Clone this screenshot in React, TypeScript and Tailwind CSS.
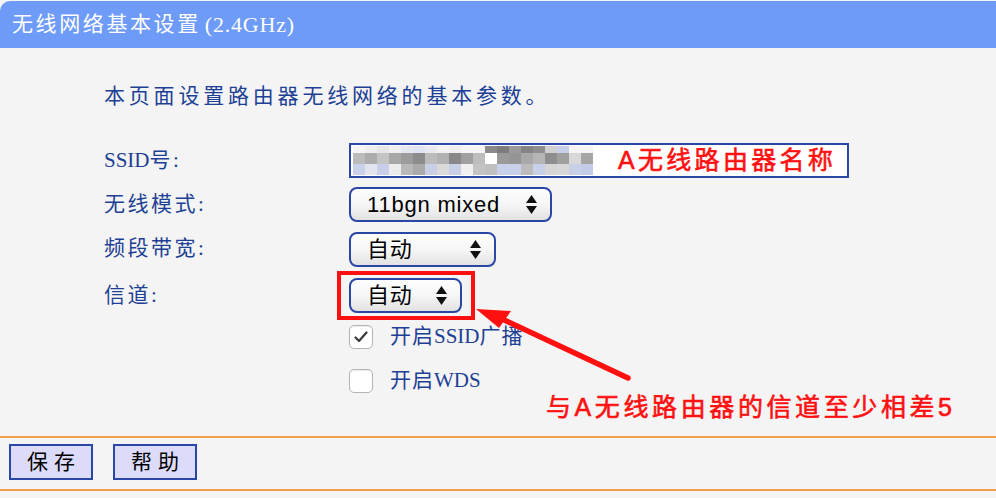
import React from "react";

const serif = "font-['Liberation_Serif','Noto_Sans_CJK_SC',serif]";
const sans = "font-['Liberation_Sans','Noto_Sans_CJK_SC',sans-serif]";

const blurRows = [
  ["#f4f4f4", "#eeeeee", "#e6e6e6", "#f0f0f0", "#e4e6f0", "#dfe3f2", "#e8e8ee", "#f2f2f2", "#eeeeee", "#f4f4f4", "#f4f4f4", "#8a8a8a", "#7c7c7c", "#9a9a9a", "#848484", "#8e8e8e", "#d0d0d0", "#c8cfe8", "#f4f4f4", "#f4f4f4"],
  ["#bbbbbb", "#acacac", "#c4c4c4", "#a8a8a8", "#9c9c9c", "#8c8c8c", "#bcbcbc", "#b2b2b2", "#888888", "#a0a0a0", "#bdbdbd", "#ffffff", "#9a9a9a", "#959595", "#a8a8a8", "#b5b5b5", "#8e8e8e", "#a0a0a0", "#d8d8d8", "#a5a5a5"],
  ["#cad1ea", "#e2e4ee", "#c9cfe8", "#ececec", "#b8b8b8", "#aaaaaa", "#c8d0e8", "#dadada", "#c8d0e8", "#f0f0f0", "#c4c4c4", "#bfbfbf", "#c8d0ea", "#c8d0ea", "#bbbbbb", "#c8d0e8", "#d6d6d6", "#d8d8d8", "#c8d0e8", "#c4cbe6"],
];

const Arrows = () => (
  <svg width="11" height="19" viewBox="0 0 11 19" className="shrink-0">
    <polygon points="0,8 5.5,0 11,8" fill="#111" />
    <polygon points="0,11 5.5,19 11,11" fill="#111" />
  </svg>
);

const Select = ({ label, w }: { label: string; w: string }) => (
  <div
    className={`flex h-[35px] ${w} items-center justify-between rounded-[8px] border-2 border-[#2a47a6] bg-gradient-to-b from-[#fdfdfd] via-[#f6f6f6] to-[#e2e2e2] pl-[16px] pr-[13px] text-[22px] text-black ${sans}`}
  >
    <span className="tracking-[0.8px]">{label}</span>
    <Arrows />
  </div>
);

const Label = ({ children }: { children: React.ReactNode }) => (
  <div className={`w-[245px] shrink-0 text-[21px] tracking-[2.5px] text-[#1d3f95] ${serif}`}>{children}</div>
);

const Check = ({ checked, text, className }: { checked?: boolean; text: React.ReactNode; className: string }) => (
  <div className={`flex items-center pl-[349px] ${className}`}>
    <div className="flex size-[24px] items-center justify-center rounded-[5px] border border-[#b4b4b4] bg-white shadow-[inset_0_1px_1px_rgba(0,0,0,0.08)]">
      {checked && (
        <svg width="14" height="12" viewBox="0 0 14 12">
          <path d="M1.5 6.5 L5 10 L12.5 1.5" stroke="#3a3a3a" strokeWidth="2.2" fill="none" strokeLinecap="round" strokeLinejoin="round" />
        </svg>
      )}
    </div>
    <span className={`ml-[17px] text-[21px] tracking-[1px] text-[#1d3f95] ${serif}`}>{text}</span>
  </div>
);

export default function App() {
  return (
    <div className="relative h-[498px] w-[996px] overflow-hidden bg-[#f4f4f4]">
      {/* header */}
      <div className={`mt-[1px] flex h-[47px] items-center rounded-tl-[10px] bg-[#6e9bf7] pl-[12px] text-[21px] tracking-[2.6px] text-white ${serif}`}>
        无线网络基本设置 <span className="ml-[4px] text-[22px] tracking-[0.8px]">(2.4GHz)</span>
      </div>

      <p className={`mt-[36px] h-[24px] pl-[104px] text-[21px] leading-[24px] tracking-[3.8px] text-[#1d3f95] ${serif}`}>
        本页面设置路由器无线网络的基本参数。
      </p>

      {/* SSID */}
      <div className="mt-[35px] flex h-[35px] items-center pl-[104px]">
        <Label>
          <span className="tracking-normal">SSID</span>号:
        </Label>
        <div className="flex h-[35px] w-[500px] items-center border-2 border-[#2a47a6] bg-white pl-[2px]">
          <div className="flex flex-col">
            {blurRows.map((row, i) => (
              <div key={i} className={`flex ${i === 0 ? "h-[7px]" : "h-[11px]"}`}>
                {row.map((c, j) => (
                  <div key={j} className="h-full w-[12px]" style={{ backgroundColor: c }} />
                ))}
              </div>
            ))}
          </div>
          <span className={`ml-[25px] text-[25px] tracking-[3.3px] text-[#ff1010] [-webkit-text-stroke:0.6px_#ff1010] ${sans}`}>A无线路由器名称</span>
        </div>
      </div>

      {/* mode */}
      <div className="mt-[9px] flex h-[35px] items-center pl-[104px]">
        <Label>无线模式:</Label>
        <Select label="11bgn mixed" w="w-[203px]" />
      </div>

      {/* band */}
      <div className="mt-[10px] flex h-[34px] items-center pl-[104px]">
        <Label>频段带宽:</Label>
        <Select label="自动" w="w-[147px]" />
      </div>

      {/* channel */}
      <div className="mt-[5px] flex h-[49px] items-center pl-[104px]">
        <div className={`w-[233px] shrink-0 text-[21px] tracking-[2.5px] text-[#1d3f95] ${serif}`}>信道:</div>
        <div className="flex h-[49px] w-[138px] items-center border-4 border-[#ff1010] pl-[8px]">
          <Select label="自动" w="w-[113px]" />
        </div>
      </div>

      <Check checked className="mt-[5px] h-[24px]" text={<>开启<span className="tracking-normal">SSID</span>广播</>} />
      <Check className="mt-[20px] h-[24px]" text={<>开启<span className="tracking-normal">WDS</span></>} />

      {/* footer */}
      <div className="mt-[43px] h-[2px] bg-[#f0a04c]" />
      <div className={`mt-[6px] flex gap-[20px] pl-[9px] text-[21px] text-black ${sans}`}>
        <button className="flex h-[36px] w-[84px] items-center justify-center border-2 border-[#2a47a6] bg-[#dcdcfa]">保 存</button>
        <button className="flex h-[36px] w-[84px] items-center justify-center border-2 border-[#2a47a6] bg-[#dcdcfa]">帮 助</button>
      </div>
      <div className="mt-[9px] h-[2px] bg-[#f0a04c]" />

      {/* annotation arrow */}
      <svg className="pointer-events-none absolute left-0 top-0" width="996" height="498">
        <line x1="628" y1="378" x2="500" y2="318" stroke="#ff1010" strokeWidth="5.5" strokeLinecap="round" />
        <polygon points="476,309 511,311 499,328" fill="#ff1010" />
      </svg>
      <div className={`absolute left-[546px] top-[389px] text-[25px] tracking-[3.6px] text-[#ff1010] [-webkit-text-stroke:0.6px_#ff1010] ${sans}`}>
        与A无线路由器的信道至少相差5
      </div>
    </div>
  );
}
